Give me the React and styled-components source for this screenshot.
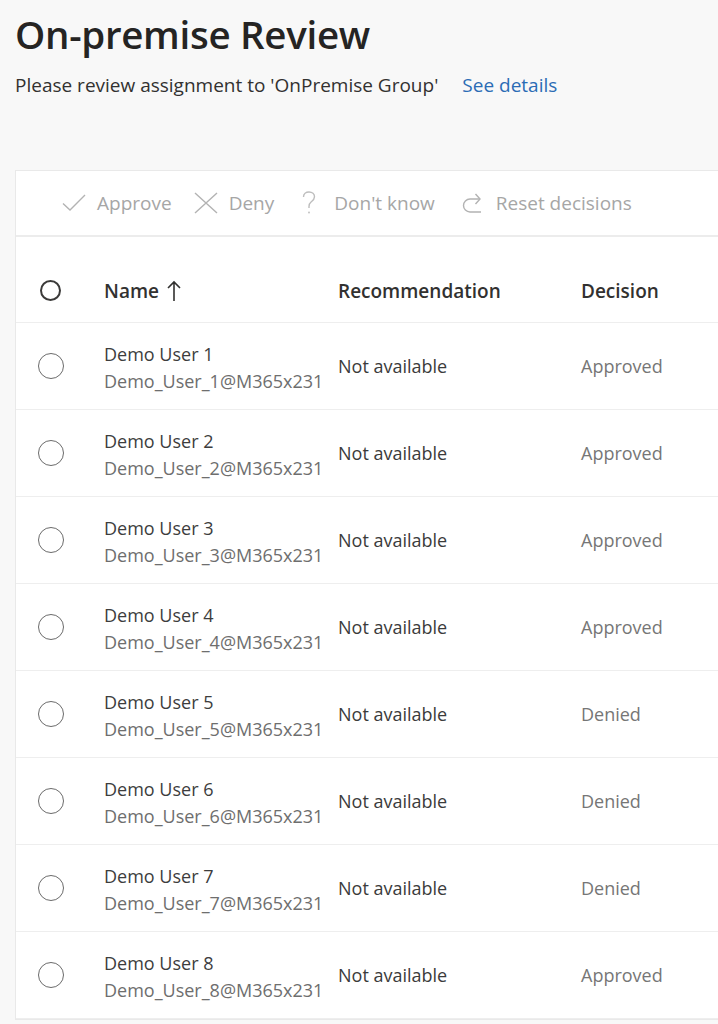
import React from 'react';
import styled, { createGlobalStyle } from 'styled-components';

const GlobalStyle = createGlobalStyle`
  html, body {
    margin: 0;
    padding: 0;
    background: #f8f8f8;
    overflow: hidden;
  }
  body {
    font-family: 'Open Sans', 'Noto Sans', sans-serif;
    color: #323130;
  }
`;

const Page = styled.div`
  padding: 8px 0 0 15px;
`;

const Title = styled.h1`
  margin: 0;
  font-size: 38.5px;
  font-weight: 600;
  line-height: 52px;
  color: #252423;
  letter-spacing: -0.3px;
`;

const SubRow = styled.div`
  display: flex;
  align-items: baseline;
  gap: 24px;
  margin-top: 9px;
  font-size: 19px;
  line-height: 32px;
`;

const SubText = styled.span`
  color: #323130;
`;

const DetailsLink = styled.a`
  color: #2b6cb5;
  text-decoration: none;
`;

const Card = styled.div`
  margin-top: 69px;
  width: 760px;
  background: #fff;
  border: 1px solid #e9e9e9;
`;

const Toolbar = styled.div`
  display: flex;
  align-items: center;
  height: 64px;
  padding-left: 46px;
  border-bottom: 2px solid #ececec;
`;

const ToolButton = styled.div`
  display: flex;
  align-items: center;
  gap: ${props => props.gap || '11px'};
  margin-right: ${props => props.space || '22px'};
  font-size: 19px;
  color: #a6a6a6;
  svg {
    flex: none;
  }
`;

const Row = styled.div`
  display: grid;
  grid-template-columns: 88px 234px 243px 1fr;
  align-items: center;
  box-sizing: border-box;
  height: ${props => (props.header ? '86px' : '87px')};
  padding-top: ${props => (props.header ? '22px' : '0')};
  border-bottom: 1px solid #eeeeee;
`;

const CheckCell = styled.div`
  display: flex;
  align-items: center;
  padding-left: ${props => (props.header ? '24px' : '22px')};
`;

const Circle = styled.span`
  display: block;
  box-sizing: border-box;
  width: ${props => (props.header ? '21px' : '26px')};
  height: ${props => (props.header ? '21px' : '26px')};
  border-radius: 50%;
  border: ${props => (props.header ? '2px solid #3b3a39' : '1.5px solid #6b6b6b')};
`;

const HeaderCell = styled.div`
  display: flex;
  align-items: center;
  gap: 8px;
  font-size: 19px;
  font-weight: 600;
  color: #323130;
`;

const NameCell = styled.div`
  display: flex;
  flex-direction: column;
  min-width: 0;
  padding-right: 17px;
  margin-top: 4px;
`;

const UserName = styled.span`
  font-size: 18px;
  line-height: 27px;
  color: #3d3d3d;
`;

const UserMail = styled.span`
  font-size: 18px;
  line-height: 27px;
  color: #6e6e6e;
  white-space: nowrap;
  overflow: hidden;
  text-overflow: clip;
`;

const Cell = styled.div`
  font-size: 18px;
  color: ${props => props.color || '#3b3b3b'};
`;

const CheckIcon = () => (
  <svg width="24" height="18" viewBox="0 0 24 18" fill="none" stroke="#b3b3b3" strokeWidth="1.4">
    <path d="M1 9.5 L8 16 L23 1" />
  </svg>
);

const CrossIcon = () => (
  <svg width="24" height="22" viewBox="0 0 24 22" fill="none" stroke="#b3b3b3" strokeWidth="1.4">
    <path d="M1 1 L23 21 M23 1 L1 21" />
  </svg>
);

const QuestionIcon = () => (
  <svg width="14" height="24" viewBox="0 0 14 24" fill="none" stroke="#bdbdbd" strokeWidth="1.4">
    <path d="M1.5 6 C1.5 2.8 4 1 7 1 C10.2 1 12.5 3 12.5 5.8 C12.5 8.5 10.8 9.6 9 11 C7.6 12.1 7 13.2 7 15.5 V17" />
    <circle cx="7" cy="21.5" r="0.9" fill="#bdbdbd" stroke="none" />
  </svg>
);

const ResetIcon = () => (
  <svg width="22" height="22" viewBox="0 0 22 22" fill="none" stroke="#b3b3b3" strokeWidth="1.4">
    <path d="M20 7 H10 A6.5 6.5 0 0 0 10 20 H21" />
    <path d="M15.5 2 L20 7 L15.5 12" />
  </svg>
);

const users = [
  { n: 1, decision: 'Approved' },
  { n: 2, decision: 'Approved' },
  { n: 3, decision: 'Approved' },
  { n: 4, decision: 'Approved' },
  { n: 5, decision: 'Denied' },
  { n: 6, decision: 'Denied' },
  { n: 7, decision: 'Denied' },
  { n: 8, decision: 'Approved' },
];

const App = () => {
  return (
    <Page>
      <GlobalStyle />
      <Title>On-premise Review</Title>
      <SubRow>
        <SubText>Please review assignment to 'OnPremise Group'</SubText>
        <DetailsLink href="#">See details</DetailsLink>
      </SubRow>
      <Card>
        <Toolbar>
          <ToolButton>
            <CheckIcon />
            Approve
          </ToolButton>
          <ToolButton space="28px">
            <CrossIcon />
            Deny
          </ToolButton>
          <ToolButton gap="18px" space="25px">
            <QuestionIcon />
            Don't know
          </ToolButton>
          <ToolButton gap="14px">
            <ResetIcon />
            Reset decisions
          </ToolButton>
        </Toolbar>
        <Row header>
          <CheckCell header>
            <Circle header />
          </CheckCell>
          <HeaderCell>
            Name
            <svg width="14" height="22" viewBox="0 0 14 22" fill="none" stroke="#323130" strokeWidth="1.6">
              <path d="M7 21 V2 M1 8 L7 2 L13 8" />
            </svg>
          </HeaderCell>
          <HeaderCell>Recommendation</HeaderCell>
          <HeaderCell>Decision</HeaderCell>
        </Row>
        {users.map(user => (
          <Row key={user.n}>
            <CheckCell>
              <Circle />
            </CheckCell>
            <NameCell>
              <UserName>Demo User {user.n}</UserName>
              <UserMail>Demo_User_{user.n}@M365x231456.onmicrosoft.com</UserMail>
            </NameCell>
            <Cell>Not available</Cell>
            <Cell color="#767676">{user.decision}</Cell>
          </Row>
        ))}
      </Card>
    </Page>
  );
};

export default App;
